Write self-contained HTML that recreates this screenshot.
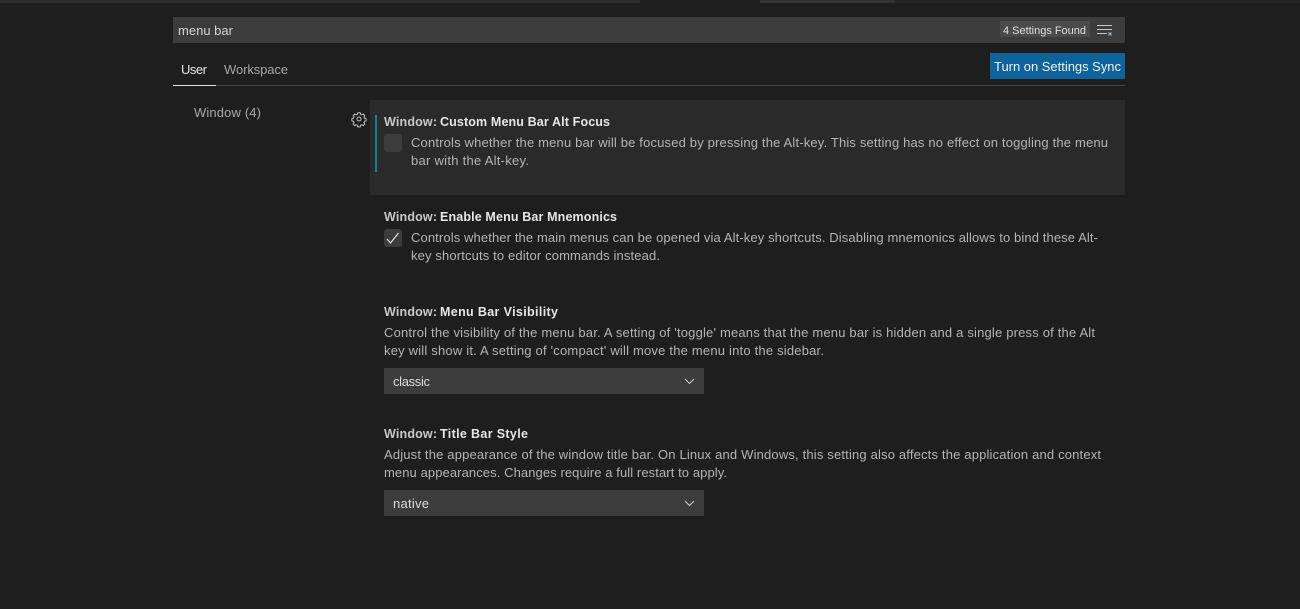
<!DOCTYPE html>
<html lang="en">
<head>
<meta charset="utf-8">
<title>Settings</title>
<style>
html,body{margin:0;padding:0;background:#1e1e1e;width:1300px;height:609px;overflow:hidden}
svg{display:block}
text{font-family:"Liberation Sans","DejaVu Sans",sans-serif;font-size:13px;fill:#b4b4b4;white-space:pre}
.t{font-weight:700;fill:#c8c8c8;font-size:12.5px}
.b{font-weight:700;fill:#e6e6e6;font-size:12.5px}
.w{fill:#d4d4d4}
</style>
</head>
<body>
<svg width="1300" height="609" viewBox="0 0 1300 609" xmlns="http://www.w3.org/2000/svg">
<rect width="1300" height="609" fill="#1e1e1e"/>
<rect x="0" y="0" width="640" height="3" fill="#2b2b2b"/>
<rect x="760" y="0" width="135" height="3" fill="#333333"/>
<rect x="895" y="0" width="405" height="3" fill="#252525"/>

<rect x="173" y="17" width="952" height="26" fill="#3c3c3c"/>
<text x="178" y="35" class="w" textLength="55">menu bar</text>
<rect x="1000" y="21" width="90" height="16" fill="#4a4a4a"/>
<text x="1003" y="34" style="font-size:11px;fill:#e0e0e0" textLength="83">4 Settings Found</text>
<g stroke="#c8c8c8" stroke-width="1" fill="none">
<path d="M1097 25.500h15M1097 29.500h15M1097 33.500h10"/>
<path d="M1108.500 32.500l3 3M1111.500 32.500l-3 3" stroke="#a8c4d8"/>
</g>

<text x="181" y="74" style="fill:#e7e7e7" textLength="26">User</text>
<text x="224" y="74" style="fill:#a6a6a6" textLength="64">Workspace</text>
<rect x="990" y="53" width="135" height="26" fill="#0e639c"/>
<text x="994" y="71" style="fill:#f0f0f0" textLength="127">Turn on Settings Sync</text>
<rect x="216" y="85" width="909" height="1" fill="#454545"/>
<rect x="173" y="85" width="43" height="1" fill="#e7e7e7"/>

<text x="194" y="117" style="fill:#a9a9a9" textLength="67">Window (4)</text>

<g fill="none" stroke="#c5c5c5" stroke-width="1">
<circle cx="359" cy="119" r="2"/>
<path d="M357.800 112.700h2.400l.4 1.600 1.200.5 1.400-.8 1.600 1.600-.8 1.400.5 1.200 1.600.4v2.400l-1.600.4-.5 1.200.8 1.400-1.600 1.600-1.400-.8-1.200.5-.4 1.600h-2.400l-.4-1.600-1.200-.5-1.400.8-1.600-1.600.8-1.400-.5-1.200-1.600-.4v-2.400l1.600-.4.5-1.200-.8-1.400 1.600-1.600 1.400.8 1.200-.5z"/>
</g>

<rect x="370" y="100" width="755" height="95" rx="1" fill="#2a2a2a"/>
<rect x="375" y="115" width="2" height="57" fill="#14808f"/>

<text x="384" y="126" class="t" textLength="53">Window:</text>
<text x="440" y="126" class="b" textLength="170">Custom Menu Bar Alt Focus</text>
<rect x="384" y="134" width="18" height="18" rx="3" fill="#3c3c3c"/>
<text x="411" y="147" textLength="697">Controls whether the menu bar will be focused by pressing the Alt-key. This setting has no effect on toggling the menu</text>
<text x="411" y="165" textLength="118">bar with the Alt-key.</text>

<text x="384" y="221" class="t" textLength="53">Window:</text>
<text x="440" y="221" class="b" textLength="177">Enable Menu Bar Mnemonics</text>
<rect x="384" y="229" width="18" height="18" rx="3" fill="#3c3c3c"/>
<path d="M387 239l3.500 4 8-10" fill="none" stroke="#e8e8e8" stroke-width="1.200"/>
<text x="411" y="242" textLength="687">Controls whether the main menus can be opened via Alt-key shortcuts. Disabling mnemonics allows to bind these Alt-</text>
<text x="411" y="260" textLength="249">key shortcuts to editor commands instead.</text>

<text x="384" y="316" class="t" textLength="53">Window:</text>
<text x="440" y="316" class="b" textLength="118">Menu Bar Visibility</text>
<text x="384" y="337" textLength="711">Control the visibility of the menu bar. A setting of 'toggle' means that the menu bar is hidden and a single press of the Alt</text>
<text x="384" y="355" textLength="440">key will show it. A setting of 'compact' will move the menu into the sidebar.</text>
<rect x="384" y="368" width="320" height="26" fill="#3c3c3c"/>
<text x="393" y="386" style="fill:#dcdcdc" textLength="37">classic</text>
<path d="M685 379l4.500 4.500 4.500-4.500" fill="none" stroke="#c8c8c8" stroke-width="1.100"/>

<text x="384" y="438" class="t" textLength="53">Window:</text>
<text x="440" y="438" class="b" textLength="88">Title Bar Style</text>
<text x="384" y="459" textLength="717">Adjust the appearance of the window title bar. On Linux and Windows, this setting also affects the application and context</text>
<text x="384" y="477" textLength="343">menu appearances. Changes require a full restart to apply.</text>
<rect x="384" y="490" width="320" height="26" fill="#3c3c3c"/>
<text x="393" y="508" style="fill:#dcdcdc" textLength="36">native</text>
<path d="M685 501l4.500 4.500 4.500-4.500" fill="none" stroke="#c8c8c8" stroke-width="1.100"/>
</svg>
</body>
</html>
